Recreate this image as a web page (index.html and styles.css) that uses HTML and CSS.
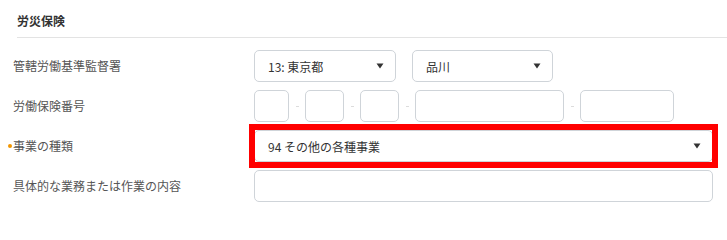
FILE: index.html
```html
<!DOCTYPE html>
<html lang="ja">
<head>
<meta charset="utf-8">
<link rel="stylesheet" href="styles.css">
</head>
<body>
<section class="panel">
  <h2 class="title">労災保険</h2>
  <div class="form">
    <div class="row">
      <div class="label">管轄労働基準監督署</div>
      <div class="fields">
        <div class="select w-pref"><span>13: 東京都</span><svg class="caret" width="8" height="6" viewBox="0 0 8 6"><path d="M0.5 0.5 H7.5 L4 5.5 Z" fill="#333"/></svg></div>
        <div class="select w-office"><span>品川</span><svg class="caret" width="8" height="6" viewBox="0 0 8 6"><path d="M0.5 0.5 H7.5 L4 5.5 Z" fill="#333"/></svg></div>
      </div>
    </div>
    <div class="row">
      <div class="label">労働保険番号</div>
      <div class="fields tight">
        <div class="input w1"></div><span class="dash"></span>
        <div class="input w2"></div><span class="dash"></span>
        <div class="input w2"></div><span class="dash"></span>
        <div class="input w3"></div><span class="dash"></span>
        <div class="input w4"></div>
      </div>
    </div>
    <div class="row">
      <div class="label required">事業の種類</div>
      <div class="fields">
        <div class="select w-full highlight"><span>94 その他の各種事業</span><svg class="caret" width="8" height="6" viewBox="0 0 8 6"><path d="M0.5 0.5 H7.5 L4 5.5 Z" fill="#333"/></svg></div>
      </div>
    </div>
    <div class="row">
      <div class="label">具体的な業務または作業の内容</div>
      <div class="fields">
        <div class="input w-full"></div>
      </div>
    </div>
  </div>
</section>
</body>
</html>
```

FILE: styles.css
```css
* { box-sizing: border-box; }
html, body { margin: 0; padding: 0; background: #fff; }
body {
  font-family: "Noto Sans CJK JP", "Noto Sans", sans-serif;
  font-size: 12px;
  color: #333;
}
.panel { width: 727px; }
.title {
  margin: 0 0 0 17px;
  padding: 12px 0 7px;
  font-size: 12px;
  line-height: 18px;
  font-weight: bold;
  color: #333;
  border-bottom: 1px solid #e3e3e3;
}
.form { padding-top: 12px; }
.row {
  display: flex;
  align-items: center;
  height: 32px;
  margin-bottom: 8px;
}
.label {
  position: relative;
  width: 254px;
  padding-left: 13px;
  color: #555;
  font-size: 12px;
  line-height: 18px;
}
.label.required::before {
  content: "";
  position: absolute;
  left: 8px;
  top: 7px;
  width: 4px;
  height: 4px;
  border-radius: 50%;
  background: #f29600;
}
.fields {
  display: flex;
  align-items: center;
  gap: 16px;
  height: 32px;
}
.fields.tight { gap: 0; }
.select, .input {
  height: 32px;
  border: 1px solid #cfd4d9;
  border-radius: 5px;
  background: #fff;
}
.select {
  position: relative;
  display: flex;
  align-items: center;
  justify-content: space-between;
  padding: 0 11px 0 13px;
  color: #333;
  font-size: 12px;
}
.caret { display: block; }
.w-pref { width: 142px; }
.w-office { width: 141px; }
.w-full { width: 459px; }
.w1 { width: 35px; }
.w2 { width: 39px; }
.w3 { width: 149px; }
.w4 { width: 94px; }
.dash {
  width: 16px;
  height: 32px;
  display: flex;
  align-items: center;
  justify-content: center;
}
.dash::before {
  content: "";
  width: 3px;
  height: 1px;
  background: #dcdcdc;
}
.highlight::after {
  content: "";
  position: absolute;
  top: -7px;
  left: -6px;
  right: -6px;
  bottom: -7px;
  border: 6px solid #ff0000;
}
```
